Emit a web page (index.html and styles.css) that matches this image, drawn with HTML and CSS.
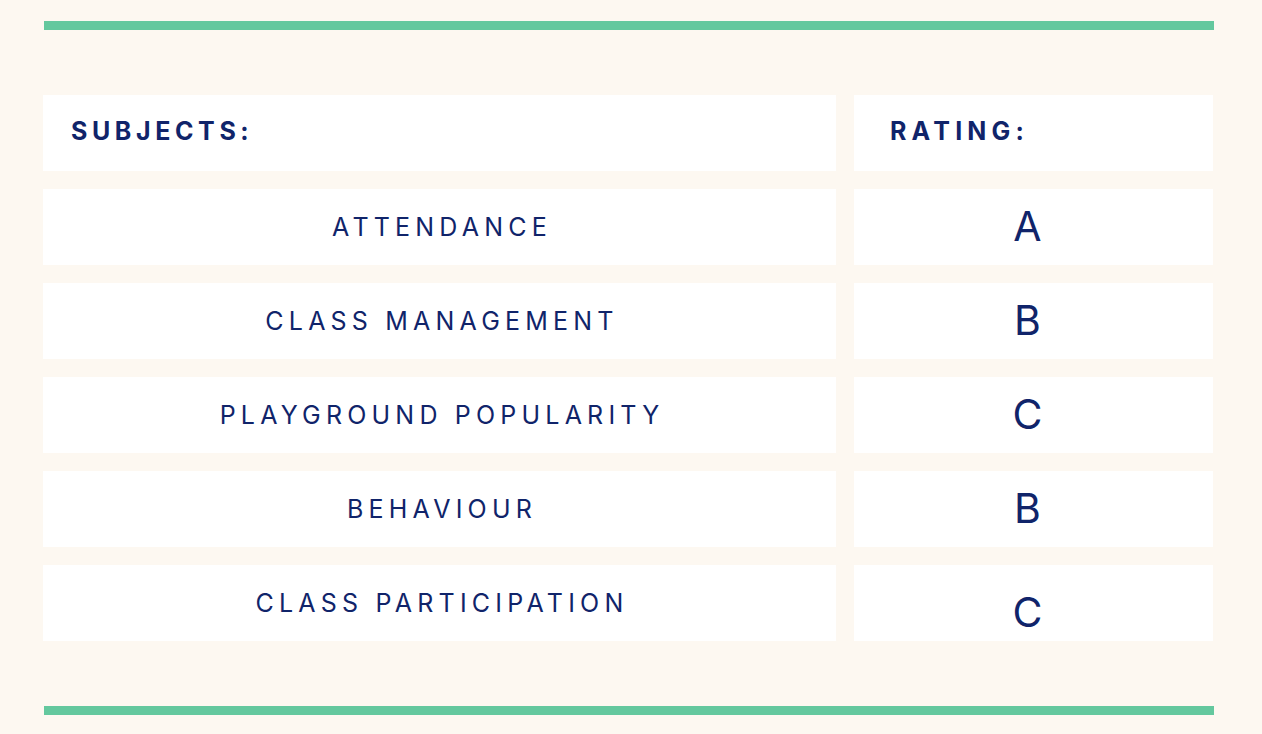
FILE: index.html
```html
<!DOCTYPE html>
<html lang="en">
<head>
<meta charset="utf-8">
<title>Report Card</title>
<link rel="stylesheet" href="styles.css">
</head>
<body>
<div class="page">
  <div class="bar"></div>
  <div class="table">
    <div class="cell head head-subjects">SUBJECTS:</div>
    <div class="cell head head-rating">RATING:</div>

    <div class="cell subject">ATTENDANCE</div>
    <div class="cell grade">A</div>

    <div class="cell subject">CLASS MANAGEMENT</div>
    <div class="cell grade">B</div>

    <div class="cell subject">PLAYGROUND POPULARITY</div>
    <div class="cell grade">C</div>

    <div class="cell subject">BEHAVIOUR</div>
    <div class="cell grade">B</div>

    <div class="cell subject">CLASS PARTICIPATION</div>
    <div class="cell grade grade-low">C</div>
  </div>
  <div class="bar"></div>
</div>
</body>
</html>
```

FILE: styles.css
```css
html, body {
  margin: 0;
  padding: 0;
  background: #fdf8f1;
}

body {
  width: 1262px;
  height: 734px;
  overflow: hidden;
  font-family: Inter, "Liberation Sans", sans-serif;
  color: #10246a;
}

.page {
  padding: 21px 48px 0 44px;
  display: flex;
  flex-direction: column;
  gap: 65px;
}

.bar {
  height: 9px;
  width: 1170px;
  background: #64c89e;
}

.table {
  margin-left: -1px;
  display: grid;
  grid-template-columns: 793px 359px;
  grid-auto-rows: 76px;
  column-gap: 18px;
  row-gap: 18px;
}

.cell {
  background: #ffffff;
  display: flex;
  align-items: center;
  box-sizing: border-box;
}

.head {
  font-weight: 700;
  font-size: 25px;
  letter-spacing: 4.6px;
  padding-bottom: 4px;
}

.head-subjects {
  padding-left: 28px;
}

.head-rating {
  padding-left: 36px;
  letter-spacing: 5.2px;
}

.subject {
  justify-content: center;
  font-weight: 400;
  font-size: 25px;
  letter-spacing: 5.2px;
  padding-left: 5px;
}

.grade {
  justify-content: center;
  font-weight: 400;
  font-size: 41px;
  padding-bottom: 2px;
  padding-right: 12px;
}

.grade-low {
  padding-top: 18px;
  padding-bottom: 0;
}
```
